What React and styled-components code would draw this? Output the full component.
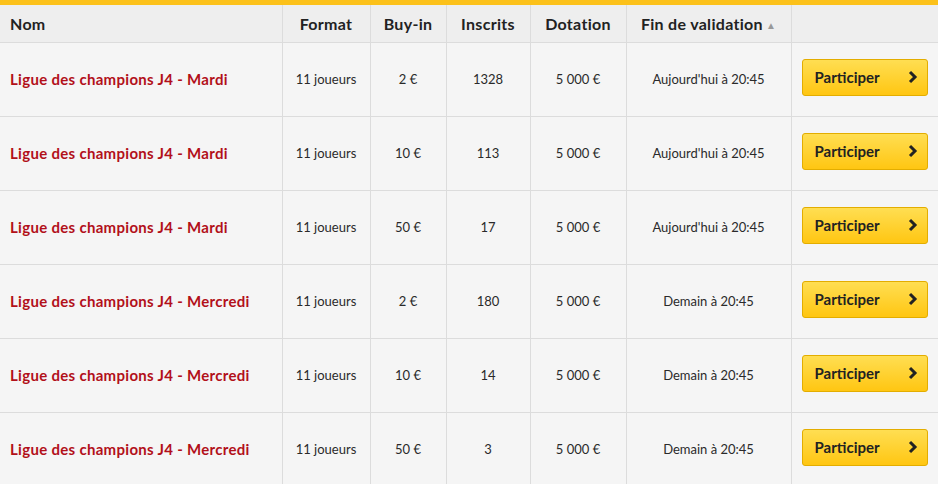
import React from 'react';
import styled, { createGlobalStyle } from 'styled-components';

const GlobalStyle = createGlobalStyle`
  body {
    margin: 0;
    background: #f5f5f5;
    font-family: Lato, "Open Sans", sans-serif;
  }
  th, td { box-sizing: border-box; }
`;

const Wrapper = styled.div`
  width: 938px;
  border-top: 5px solid #fcc11a;
  background: #f5f5f5;
`;

const Table = styled.table`
  width: 100%;
  border-collapse: collapse;
  table-layout: fixed;
`;

const HeadCell = styled.th`
  width: ${p => p.w}px;
  height: 37px;
  padding: 0 ${p => (p.left ? '10px' : '0')};
  background: #eeeeee;
  border-left: 1px solid #dcdcdc;
  border-bottom: 1px solid #dcdcdc;
  text-align: ${p => (p.left ? 'left' : 'center')};
  font-size: 16px;
  letter-spacing: 0.3px;
  font-weight: 700;
  color: #222;
  &:first-child { border-left: none; }
`;

const SortArrow = styled.span`
  display: inline-block;
  margin-left: 3px;
  font-size: 10px;
  color: #999;
  vertical-align: 1px;
`;

const Row = styled.tr`
  height: 74px;
`;

const Cell = styled.td`
  padding: 0;
  border-left: 1px solid #dcdcdc;
  border-bottom: 1px solid #dcdcdc;
  text-align: center;
  font-size: 13px;
  color: #2a2a2a;
  &:first-child { border-left: none; }
`;

const NameCell = styled(Cell)`
  text-align: left;
  padding-left: 10px;
  font-size: 15px;
  letter-spacing: 0.3px;
  font-weight: 700;
  color: #b2101a;
`;

const ActionCell = styled(Cell)`
  text-align: left;
  padding-left: 10px;
`;

const JoinButton = styled.button`
  display: flex;
  align-items: center;
  justify-content: space-between;
  width: 126px;
  height: 37px;
  margin-bottom: 4px;
  padding: 0 9px 0 12px;
  border: 1px solid #e3ad00;
  border-radius: 3px;
  background: linear-gradient(#ffde52, #ffc612);
  font-family: inherit;
  font-size: 15px;
  font-weight: 700;
  color: #222;
  cursor: pointer;
`;

const Chevron = () => (
  <svg width="11" height="14" viewBox="0 0 11 14">
    <path d="M3 2 L8 7 L3 12" fill="none" stroke="#222" strokeWidth="3" />
  </svg>
);

const columns = [
  { label: 'Nom', w: 282, left: true },
  { label: 'Format', w: 88 },
  { label: 'Buy-in', w: 76 },
  { label: 'Inscrits', w: 84 },
  { label: 'Dotation', w: 96 },
  { label: 'Fin de validation', w: 165, sort: true },
  { label: '', w: 147 },
];

const contests = [
  { name: 'Ligue des champions J4 - Mardi', buyIn: '2 €', entries: 1328, end: "Aujourd'hui à 20:45" },
  { name: 'Ligue des champions J4 - Mardi', buyIn: '10 €', entries: 113, end: "Aujourd'hui à 20:45" },
  { name: 'Ligue des champions J4 - Mardi', buyIn: '50 €', entries: 17, end: "Aujourd'hui à 20:45" },
  { name: 'Ligue des champions J4 - Mercredi', buyIn: '2 €', entries: 180, end: 'Demain à 20:45' },
  { name: 'Ligue des champions J4 - Mercredi', buyIn: '10 €', entries: 14, end: 'Demain à 20:45' },
  { name: 'Ligue des champions J4 - Mercredi', buyIn: '50 €', entries: 3, end: 'Demain à 20:45' },
];

export default function App() {
  return (
    <>
      <GlobalStyle />
      <Wrapper>
        <Table>
          <thead>
            <tr>
              {columns.map((c, i) => (
                <HeadCell key={i} w={c.w} left={c.left}>
                  {c.label}
                  {c.sort && <SortArrow>▲</SortArrow>}
                </HeadCell>
              ))}
            </tr>
          </thead>
          <tbody>
            {contests.map((c, i) => (
              <Row key={i}>
                <NameCell>{c.name}</NameCell>
                <Cell>11 joueurs</Cell>
                <Cell>{c.buyIn}</Cell>
                <Cell>{c.entries}</Cell>
                <Cell>5 000 €</Cell>
                <Cell>{c.end}</Cell>
                <ActionCell>
                  <JoinButton>
                    Participer
                    <Chevron />
                  </JoinButton>
                </ActionCell>
              </Row>
            ))}
          </tbody>
        </Table>
      </Wrapper>
    </>
  );
}
